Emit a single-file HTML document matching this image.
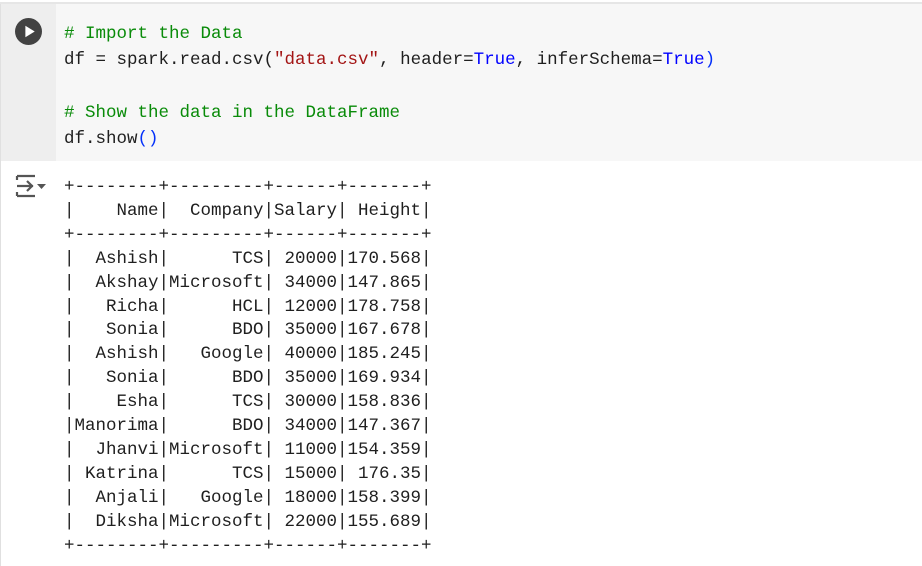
<!DOCTYPE html>
<html><head><style>
body{margin:0;width:922px;height:566px;background:#fff;position:relative;overflow:hidden;font-family:"Liberation Mono",monospace;}
.topline{position:absolute;left:0;top:2px;width:922px;height:2px;background:#e6e6e6;}
.lbar{position:absolute;left:0;top:4px;width:1px;height:562px;background:#e0e0e0;}
.gutter{position:absolute;left:1px;top:4px;width:55px;height:157px;background:#eeeeee;}
.code{position:absolute;left:56px;top:4px;width:866px;height:157px;background:#f7f7f7;}
pre{margin:0;position:absolute;font-family:"Liberation Mono",monospace;font-size:17.5px;white-space:pre;color:#1f1f1f;}
.c{color:#098b09}.s{color:#a31515}.k{color:#0000ff}.p{color:#0431fa}
</style></head><body>
<div class="topline"></div>
<div class="lbar"></div>
<div class="gutter"></div>
<div class="code"></div>
<svg style="position:absolute;left:15px;top:18px" width="27" height="27" viewBox="0 0 26 26"><circle cx="13" cy="13" r="13" fill="#424242"/><path d="M10 7.5 L19 13 L10 18.5Z" fill="#fff"/></svg>
<svg style="position:absolute;left:15px;top:173px" width="32" height="26" viewBox="0 0 32 26"><path d="M2 3h18M2 23h18M2 13h16M12 8l5 5-5 5M2 3v4M2 19v4" stroke="#555" stroke-width="2.2" fill="none"/><path d="M22 11h9l-4.5 5z" fill="#555"/></svg>
<pre style="left:64px;top:21px;line-height:26.2px"><span class="c"># Import the Data</span>
df = spark.read.csv(<span class="s">"data.csv"</span>, header=<span class="k">True</span>, inferSchema=<span class="k">True</span><span class="p">)</span>

<span class="c"># Show the data in the DataFrame</span>
df.show<span class="p">()</span></pre>
<pre style="left:64px;top:176px;line-height:23.9px">+--------+---------+------+-------+
|    Name|  Company|Salary| Height|
+--------+---------+------+-------+
|  Ashish|      TCS| 20000|170.568|
|  Akshay|Microsoft| 34000|147.865|
|   Richa|      HCL| 12000|178.758|
|   Sonia|      BDO| 35000|167.678|
|  Ashish|   Google| 40000|185.245|
|   Sonia|      BDO| 35000|169.934|
|    Esha|      TCS| 30000|158.836|
|Manorima|      BDO| 34000|147.367|
|  Jhanvi|Microsoft| 11000|154.359|
| Katrina|      TCS| 15000| 176.35|
|  Anjali|   Google| 18000|158.399|
|  Diksha|Microsoft| 22000|155.689|
+--------+---------+------+-------+</pre>
</body></html>
